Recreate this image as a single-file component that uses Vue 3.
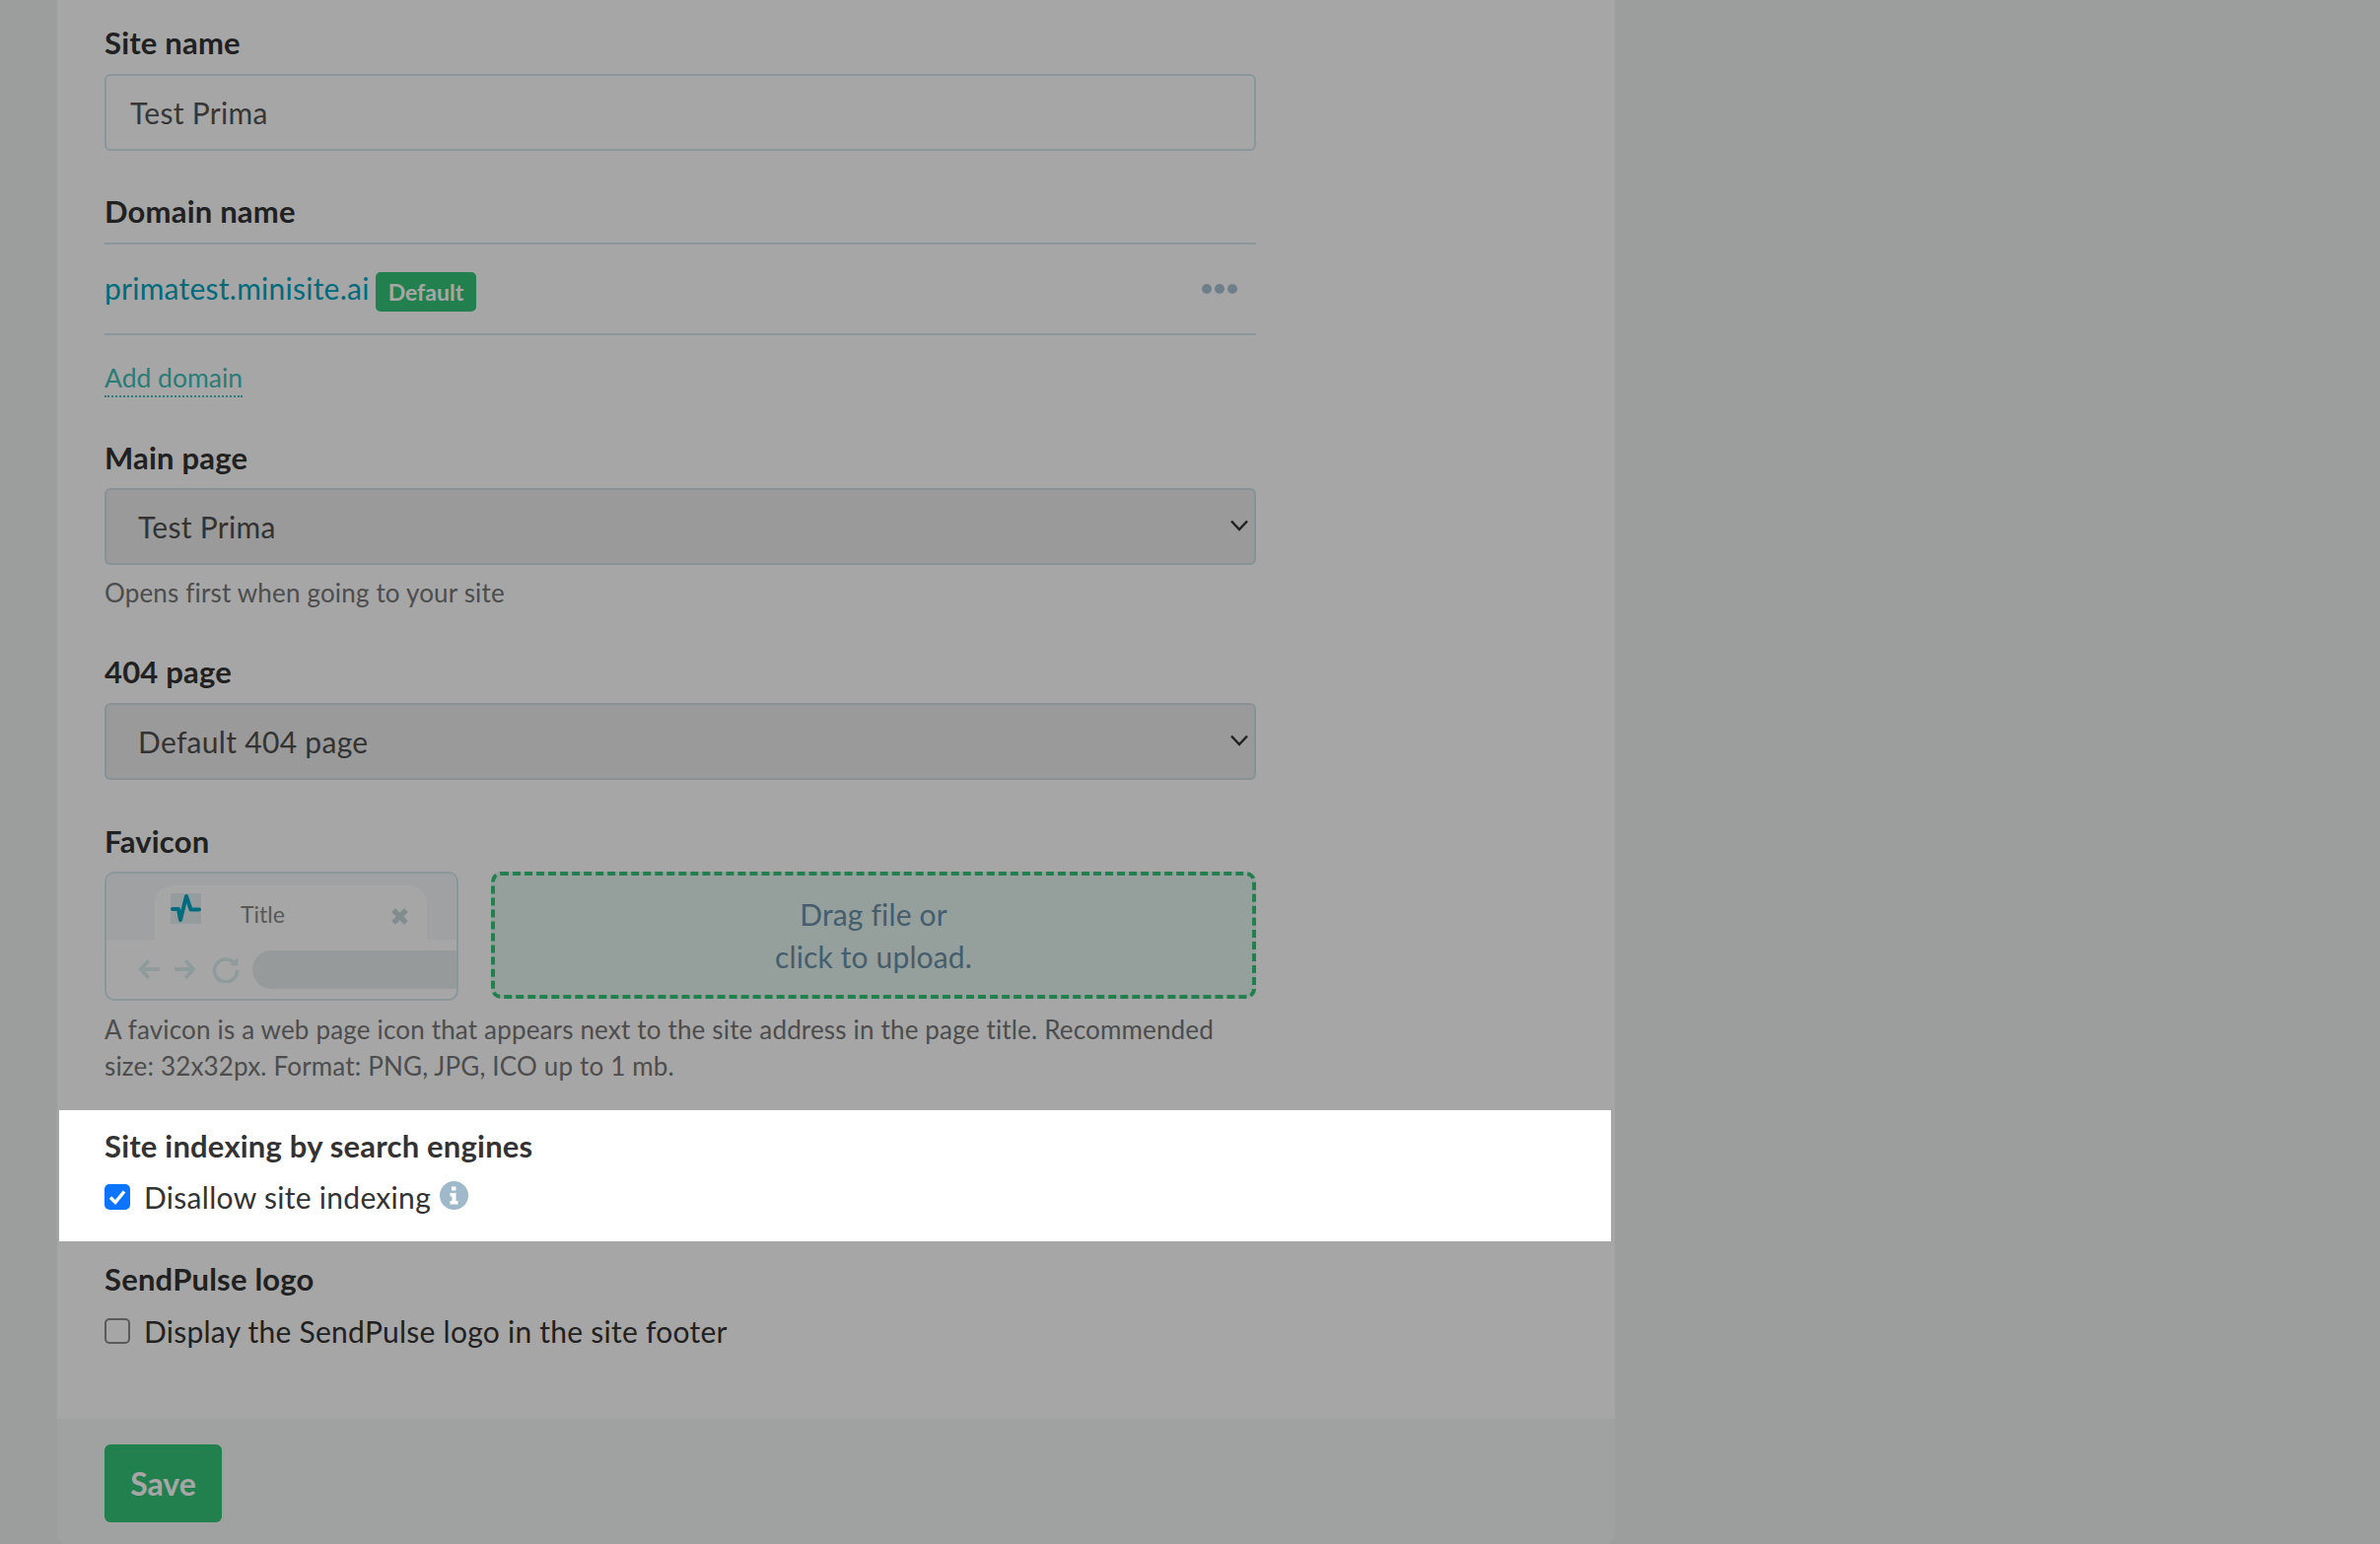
<script setup>
const bar = 'M2 16 H8 L10 27 L16 3 L20.500 16.500 H29'
</script>

<template>
  <div class="page">
    <main class="panel">
      <div class="body">
        <label class="label first site">Site name</label>
        <div class="field">Test Prima</div>

        <label class="label dom">Domain name</label>
        <div class="domain-row">
          <a class="domain">primatest.minisite.ai</a>
          <span class="badge">Default</span>
          <span class="dots"><i></i><i></i><i></i></span>
        </div>
        <a class="add">Add domain</a>

        <label class="label main-page">Main page</label>
        <div class="field select">
          Test Prima
          <svg class="chev" viewBox="0 0 18 12"><path d="M1 1.500 L9 10 L17 1.500" /></svg>
        </div>
        <p class="help one">Opens first when going to your site</p>

        <label class="label p404">404 page</label>
        <div class="field select">
          Default 404 page
          <svg class="chev" viewBox="0 0 18 12"><path d="M1 1.500 L9 10 L17 1.500" /></svg>
        </div>

        <label class="label fav">Favicon</label>
        <div class="favicon-row">
          <div class="browser">
            <div class="strip">
              <div class="tab">
                <svg class="pulse" viewBox="0 0 31 31"><path :d="bar" /></svg>
                <span class="tab-title">Title</span>
                <svg class="close" viewBox="0 0 16 16"><path d="M2 2 L14 14 M14 2 L2 14" /></svg>
              </div>
            </div>
            <div class="nav">
              <svg class="nav-icon" viewBox="0 0 22 22"><path d="M20 11 H3 M10 3 L2.500 11 L10 19" /></svg>
              <svg class="nav-icon" viewBox="0 0 22 22"><path d="M2 11 H19 M12 3 L19.500 11 L12 19" /></svg>
              <svg class="nav-icon reload" viewBox="0 0 28 28"><path d="M23.500 9 A11.500 11.500 0 1 0 25.500 15" /><path class="fill" d="M18 10 L26.500 10.500 L26.500 2 Z" /></svg>
              <div class="url"></div>
            </div>
          </div>
          <div class="drop">Drag file or<br />click to upload.</div>
        </div>
        <p class="help two">A favicon is a web page icon that appears next to the site address in the page title. Recommended size: 32x32px. Format: PNG, JPG, ICO up to 1 mb.</p>

        <section class="indexing">
          <div class="spot"></div>
          <label class="label first">Site indexing by search engines</label>
          <div class="check-row">
            <span class="box on">
              <svg viewBox="0 0 26 26"><path d="M6 13.500 L11 18.500 L20 7.500" /></svg>
            </span>
            <span>Disallow site indexing</span>
            <svg class="info" viewBox="0 0 29 29">
              <circle cx="14.500" cy="14.500" r="14.500" />
              <path class="glyph" d="M12 5.500 H16.500 V9.500 H12 Z M10.500 12 H16.500 V20 H18.500 V23.500 H10.500 V20 H12.500 V15.500 H10.500 Z" />
            </svg>
          </div>
        </section>

        <label class="label send">SendPulse logo</label>
        <div class="check-row plain">
          <span class="box"></span>
          <span>Display the SendPulse logo in the site footer</span>
        </div>
      </div>
      <footer class="foot">
        <button class="save">Save</button>
      </footer>
    </main>
  </div>
</template>

<style>
html, body { margin: 0; overflow: hidden; }
</style>

<style scoped>
.page {
  height: 1566px;
  overflow: hidden;
  background: #f0f3f2;
  font-family: "Lato", "Noto Sans", sans-serif;
  font-size: 30px;
  letter-spacing: 0.3px;
  color: #333;
}
.panel {
  margin-left: 58px;
  width: 1580px;
  height: 1566px;
  display: flex;
  flex-direction: column;
  background: #fff;
  border-radius: 0 0 12px 12px;
  box-sizing: border-box;
}
.body { flex: 1; padding: 23px 364px 0 48px; position: relative; }
.label { display: block; font-weight: 700; font-size: 31px; letter-spacing: 0.2px; line-height: 40px; margin: 43px 0 11px; }
.label.first { margin-top: 0; }
.label.site { margin-bottom: 12px; }
.label.dom { margin-top: 41px; margin-bottom: 12px; }
.field {
  height: 78px;
  box-sizing: border-box;
  border: 2px solid #d4e8ec;
  border-radius: 6px;
  padding: 0 24px;
  display: flex;
  align-items: center;
  position: relative;
  color: #555;
}
.select { background: #ededed; padding-left: 32px; color: #4f4f4f; border-color: #d0e0e4; }
.chev { position: absolute; right: 6px; top: 30px; width: 18px; height: 12px; fill: none; stroke: #333; stroke-width: 2.500; }
.domain-row {
  height: 94px;
  box-sizing: border-box;
  border-top: 2px solid #d4e8ec;
  border-bottom: 2px solid #d4e8ec;
  display: flex;
  align-items: center;
  gap: 6px;
}
.domain { color: #00a5c0; letter-spacing: 0.25px; margin-top: -2px; }
.badge {
  background: #33c579;
  color: #fff;
  font-weight: 700;
  font-size: 23px;
  letter-spacing: 0;
  line-height: 40px;
  padding: 0 13px;
  border-radius: 5px;
  margin-top: 6px;
}
.dots { margin-left: auto; margin-right: 19px; display: flex; gap: 3px; }
.dots i { width: 10px; height: 10px; border-radius: 50%; background: #a9c3d5; }
.add {
  display: inline-block;
  margin-top: 25px;
  font-size: 26.500px;
  letter-spacing: 0;
  line-height: 36px;
  color: #3fbfb8;
  border-bottom: 2px dotted #3fbfb8;
}
.label.main-page { margin-top: 41px; }
.label.p404 { margin-top: 41px; margin-bottom: 12px; }
.label.fav { margin-top: 42px; }
.help { margin: 10px 0 0; font-size: 26px; letter-spacing: 0.17px; line-height: 37px; color: #777; }
.help.two { margin-top: 11px; }
.favicon-row { display: flex; gap: 33px; }
.browser {
  width: 359px;
  height: 131px;
  box-sizing: border-box;
  border: 2px solid #d4e8ec;
  border-radius: 10px;
  overflow: hidden;
  flex: none;
}
.strip { height: 67px; background: #f6f8f9; padding: 12px 0 0 49px; box-sizing: border-box; }
.tab {
  width: 276px;
  height: 55px;
  background: #fff;
  border-radius: 18px 18px 0 0;
  position: relative;
}
.pulse { position: absolute; left: 16px; top: 8px; width: 31px; height: 31px; fill: none; stroke: #00a5c0; stroke-width: 4; stroke-linecap: round; stroke-linejoin: round; background: #e4f0f3; }
.tab-title { position: absolute; left: 87px; top: 14px; font-size: 23px; letter-spacing: 0; line-height: 30px; color: #888; }
.close { position: absolute; right: 19px; top: 23px; width: 17px; height: 17px; fill: none; stroke: #c5d8da; stroke-width: 5; }
.nav { display: flex; align-items: center; height: 60px; padding-left: 32px; box-sizing: border-box; gap: 11px; }
.nav-icon { width: 24px; height: 24px; fill: none; stroke: #dcefef; stroke-width: 3.500; flex: none; }
.nav-icon.reload { width: 28px; height: 28px; margin-left: 5px; }
.nav-icon .fill { fill: #dcefef; stroke: none; }
.url { flex: 1; height: 39px; background: #e6edee; border-radius: 20px 0 0 20px; margin-left: 2px; }
.drop {
  flex: 1;
  height: 129px;
  box-sizing: border-box;
  border: 4px dashed #33c579;
  border-radius: 10px;
  background: #e5f5ee;
  color: #6a90a8;
  text-align: center;
  line-height: 43px;
  letter-spacing: 0.15px;
  display: flex;
  align-items: center;
  justify-content: center;
}
.indexing { position: relative; margin-top: 42px; }
.spot {
  position: absolute;
  left: -46px;
  right: -360px;
  top: -16px;
  height: 133px;
  box-shadow: 0 0 0 3000px rgba(0, 0, 0, 0.35);
  pointer-events: none;
  z-index: 5;
}
.check-row { display: flex; align-items: center; gap: 14px; height: 40px; margin-top: 12px; }
.box {
  width: 26px;
  height: 26px;
  box-sizing: border-box;
  border: 2px solid #8a8a8a;
  border-radius: 5px;
  background: #fff;
  flex: none;
}
.box.on { background: #0d74ff; border: 0; }
.box svg { display: block; width: 26px; height: 26px; fill: none; stroke: #fff; stroke-width: 3.500; }
.info { width: 29px; height: 29px; flex: none; margin: -4px 0 0 -5px; fill: #a0b9ca; }
.info .glyph { fill: #fff; }
.label.send { margin-top: 43px; margin-bottom: 0; }
.plain { margin-top: 13px; letter-spacing: 0.25px; }
.foot { height: 127px; box-sizing: border-box; background: #f5f9f6; padding: 26px 0 0 48px; flex: none; border-radius: 0 0 12px 12px; }
.save {
  width: 119px;
  height: 79px;
  border: 0;
  border-radius: 6px;
  background: #33c579;
  color: #fff;
  font: 700 32px "Lato", "Noto Sans", sans-serif;
  padding: 0;
}
</style>
